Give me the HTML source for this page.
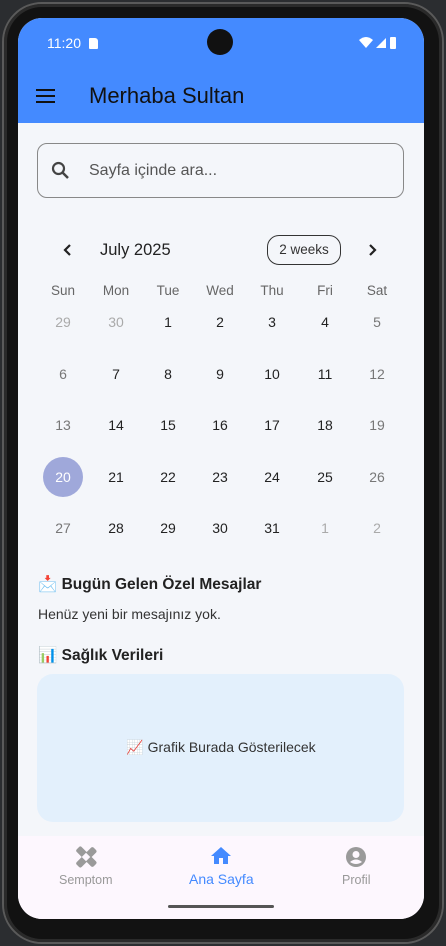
<!DOCTYPE html>
<html><head><meta charset="utf-8"><style>
*{margin:0;padding:0;box-sizing:border-box}
body{width:446px;height:946px;background:#2b2d30;position:relative;overflow:hidden;font-family:"Liberation Sans","Noto Sans CJK JP",sans-serif}
.phone{position:absolute;left:2px;top:2px;width:442px;height:942px;border-radius:40px;background:#121212;border:2px solid #5a5a5a;box-shadow:inset 0 0 0 3px #2a2a2a}
.screen{position:absolute;left:18px;top:18px;width:406px;height:901px;border-radius:24px;overflow:hidden;background:#f4f6fa}
.abs{position:absolute}
.bar{left:0;top:0;width:406px;height:105px;background:#448aff}
.c{position:absolute;width:40px;margin-left:-20px;text-align:center;font-size:14px;color:#222}
.g{color:#aaa}
.h{color:#666;font-size:13.5px}
</style></head><body>
<div class="phone"></div>
<div class="screen">
 <div class="abs bar"></div>
 <div class="abs" style="left:29px;top:17px;color:#fff;font-size:14px">11:20</div>
 <div class="abs" style="left:71px;top:20px;width:9px;height:11px;background:#fff;border-radius:1px 3px 1px 1px"></div>
 <div class="abs" style="left:189px;top:11px;width:26px;height:26px;border-radius:50%;background:#111"></div>
 <svg class="abs" style="left:340px;top:17px" width="50" height="16" viewBox="0 0 50 16">
  <path d="M1 5 Q8 -1 15 5 L8 13 Z" fill="#fff"/><path d="M18 13 L28 3 L28 13 Z" fill="#fff"/><rect x="32" y="2" width="6" height="12" rx="1" fill="#fff"/></svg>
 <svg class="abs" style="left:18px;top:70px" width="20" height="16"><rect y="1" width="19" height="2" fill="#111"/><rect y="7" width="19" height="2" fill="#111"/><rect y="13" width="19" height="2" fill="#111"/></svg>
 <div class="abs" style="left:71px;top:65px;font-size:22px;color:#111">Merhaba Sultan</div>

 <div class="abs" style="left:19px;top:125px;width:367px;height:55px;border:1px solid #888;border-radius:10px"></div>
 <svg class="abs" style="left:33px;top:143px" width="20" height="20" viewBox="0 0 20 20"><circle cx="7.5" cy="7.5" r="5.5" stroke="#444" stroke-width="2.2" fill="none"/><path d="M11.5 11.5 L17 17" stroke="#444" stroke-width="2.5"/></svg>
 <div class="abs" style="left:71px;top:144px;font-size:16px;color:#555">Sayfa içinde ara...</div>

 <svg class="abs" style="left:44px;top:225px" width="12" height="14"><path d="M8 2 L3 7 L8 12" stroke="#222" stroke-width="2.2" fill="none"/></svg>
 <div class="abs" style="left:82px;top:223px;font-size:16.5px;color:#222">July 2025</div>
 <div class="abs" style="left:249px;top:217px;width:74px;height:30px;border:1px solid #333;border-radius:12px;font-size:13.5px;color:#333;text-align:center;line-height:28px">2 weeks</div>
 <svg class="abs" style="left:348px;top:225px" width="12" height="14"><path d="M4 2 L9 7 L4 12" stroke="#222" stroke-width="2.2" fill="none"/></svg>

 <div class="abs" style="left:25px;top:439px;width:40px;height:40px;border-radius:50%;background:#9fa8da"></div>

 <div id="cal"></div>

 <div class="abs" style="left:20px;top:557px;font-size:15.5px;font-weight:bold;color:#222">📩 Bugün Gelen Özel Mesajlar</div>
 <div class="abs" style="left:20px;top:588px;font-size:14px;color:#333">Henüz yeni bir mesajınız yok.</div>
 <div class="abs" style="left:20px;top:628px;font-size:15.5px;font-weight:bold;color:#222">📊 Sağlık Verileri</div>
 <div class="abs" style="left:19px;top:656px;width:367px;height:148px;background:#e3f0fc;border-radius:16px"></div>
 <div class="abs" style="left:0;width:406px;top:721px;text-align:center;font-size:14px;color:#333">📈 Grafik Burada Gösterilecek</div>

 <div class="abs" style="left:0;top:818px;width:406px;height:83px;background:#fdf7fe"></div>
 <svg class="abs" style="left:57px;top:828px" width="22" height="22" viewBox="0 0 22 22"><g fill="#9a9a9a"><rect x="8" y="-1" width="7" height="24" rx="2" transform="rotate(45 11 11)"/><rect x="8" y="-1" width="7" height="24" rx="2" transform="rotate(-45 11 11)"/></g><rect x="8" y="8" width="6" height="6" fill="#fdf7fe" transform="rotate(45 11 11)"/></svg>
 <div class="abs" style="left:41px;top:855px;font-size:12.5px;color:#999">Semptom</div>
 <svg class="abs" style="left:192px;top:828px" width="22" height="20" viewBox="0 0 22 20"><path d="M11 1 L21 10 L18 10 L18 18 L13 18 L13 12 L9 12 L9 18 L4 18 L4 10 L1 10 Z" fill="#448aff"/></svg>
 <div class="abs" style="left:171px;top:853px;font-size:14px;color:#448aff">Ana Sayfa</div>
 <svg class="abs" style="left:327px;top:828px" width="22" height="22" viewBox="0 0 22 22"><circle cx="11" cy="11" r="10" fill="#9a9a9a"/><circle cx="11" cy="8.5" r="3.5" fill="#fdf7fe"/><path d="M5 16 Q11 11 17 16 Q11 20 5 16Z" fill="#fdf7fe"/></svg>
 <div class="abs" style="left:324px;top:855px;font-size:12.5px;color:#999">Profil</div>
 <div class="abs" style="left:150px;top:887px;width:106px;height:3px;border-radius:2px;background:#555"></div>
</div>
<script>
var xs=[63,116,168,220,272,325,377],ys=[322,374,425,477,528];
var hd=["Sun","Mon","Tue","Wed","Thu","Fri","Sat"];
var d=[[29,30,1,2,3,4,5],[6,7,8,9,10,11,12],[13,14,15,16,17,18,19],[20,21,22,23,24,25,26],[27,28,29,30,31,1,2]];
var s="";
for(var i=0;i<7;i++)s+='<div class="c h" style="left:'+(xs[i]-18)+'px;top:'+(291-18-8)+'px">'+hd[i]+'</div>';
for(var r=0;r<5;r++)for(var i=0;i<7;i++){
 var col="#222";
 if((r==0&&i<2)||(r==4&&i>4))col="#aaa";else if(i==0||i==6)col="#777";
 if(r==3&&i==0)col="#fff";
 s+='<div class="c" style="color:'+col+';left:'+(xs[i]-18)+'px;top:'+(ys[r]-18-8)+'px">'+d[r][i]+'</div>';}
document.getElementById("cal").innerHTML=s;
</script>
</body></html>
